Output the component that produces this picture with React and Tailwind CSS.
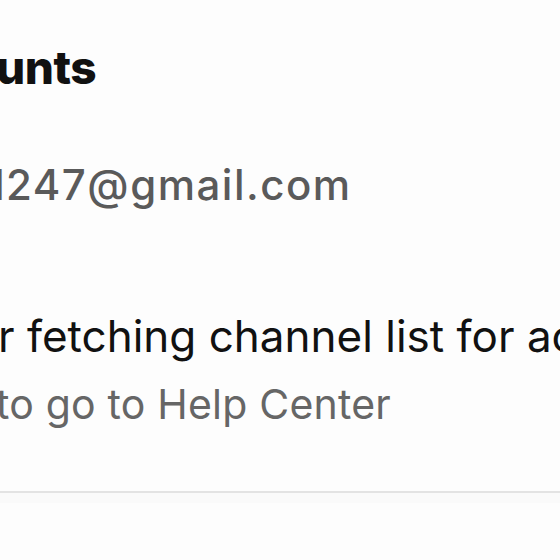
const App = () => {
  return (
    <div
      className="w-[560px] h-[560px] overflow-hidden bg-[#fdfdfd] flex flex-col"
      style={{ fontFamily: "Inter, 'Noto Sans', sans-serif" }}
    >
      <div className="h-[44px]" />
      <h1 className="text-[46px] leading-none font-extrabold text-[#111111] whitespace-nowrap -ml-[4px] tracking-[-0.5px]">
        unts
      </h1>
      <div className="h-[74px]" />
      <p className="text-[42px] leading-none font-medium text-[#5a5a5a] whitespace-nowrap -ml-[6px] tracking-[1.5px]">
        l247@gmail.com
      </p>
      <div className="h-[108px]" />
      <p className="text-[44px] leading-none text-[#111111] whitespace-nowrap -ml-[2px]">
        r fetching channel list for accounts
      </p>
      <div className="h-[26px]" />
      <p className="text-[41px] leading-none text-[#666666] whitespace-nowrap -ml-[4px] tracking-[0.2px]">
        to go to Help Center
      </p>
      <div className="h-[66px]" />
      <div className="border-t-2 border-[#e3e3e3]" />
      <div className="h-[10px] bg-[#fafafa]" />
    </div>
  );
};

export default App;
